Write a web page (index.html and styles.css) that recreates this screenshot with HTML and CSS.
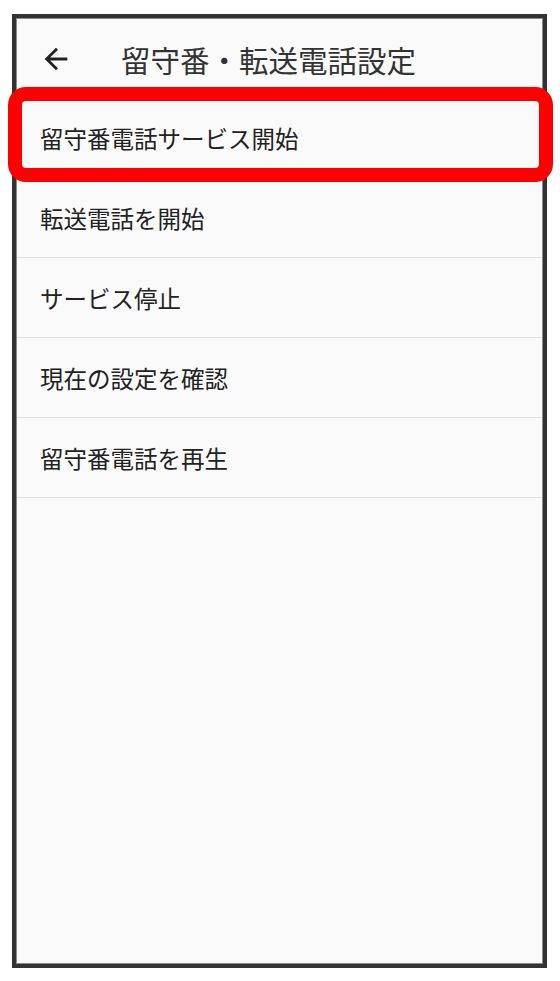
FILE: index.html
```html
<!DOCTYPE html>
<html lang="ja">
<head>
    <meta charset="UTF-8">
    <meta name="viewport" content="width=device-width, initial-scale=1.0">
    <title>留守番・転送電話設定</title>
    <link rel="stylesheet" href="styles.css">
</head>
<body>
    <div class="phone">
        <div class="app-bar">
            <a href="#" class="back" aria-label="戻る">
                <svg viewBox="0 0 24 24" width="34" height="34">
                    <path d="M20 11H7.83l5.59-5.59L12 4l-8 8 8 8 1.41-1.41L7.83 13H20v-2z" fill="#222"/>
                </svg>
            </a>
            <h1>留守番・転送電話設定</h1>
        </div>

        <ul class="menu">
            <li class="highlight">留守番電話サービス開始</li>
            <li>転送電話を開始</li>
            <li>サービス停止</li>
            <li>現在の設定を確認</li>
            <li>留守番電話を再生</li>
        </ul>
    </div>
</body>
</html>
```

FILE: styles.css
```css
body {
    font-family: "Noto Sans CJK JP", "Noto Sans", sans-serif;
    background-color: #fff;
    margin: 0;
    padding: 0;
}

.phone {
    box-sizing: border-box;
    width: 535px;
    height: 954px;
    margin: 14px 0 0 12px;
    border: 4px solid #333;
    box-shadow: inset 0 0 0 1px #888;
    background: #fafafa;
    padding: 1px;
}

.app-bar {
    display: flex;
    align-items: center;
    height: 79px;
    padding-left: 22px;
}

    .app-bar .back {
        display: flex;
    }

    .app-bar h1 {
        margin: 0 0 0 48px;
        font-size: 29.5px;
        font-weight: normal;
        color: #333;
    }

.menu {
    list-style: none;
    margin: 0;
    padding: 0;
}

    .menu li {
        position: relative;
        display: flex;
        align-items: center;
        height: 79px;
        padding-left: 23px;
        border-bottom: 1px solid #e0e0e0;
        font-size: 23.5px;
        color: #222;
    }

    .menu li.highlight::after {
        content: "";
        position: absolute;
        top: -11px;
        left: -9px;
        right: -11px;
        bottom: -5px;
        border: 14px solid #f00;
        border-radius: 18px;
    }
```
